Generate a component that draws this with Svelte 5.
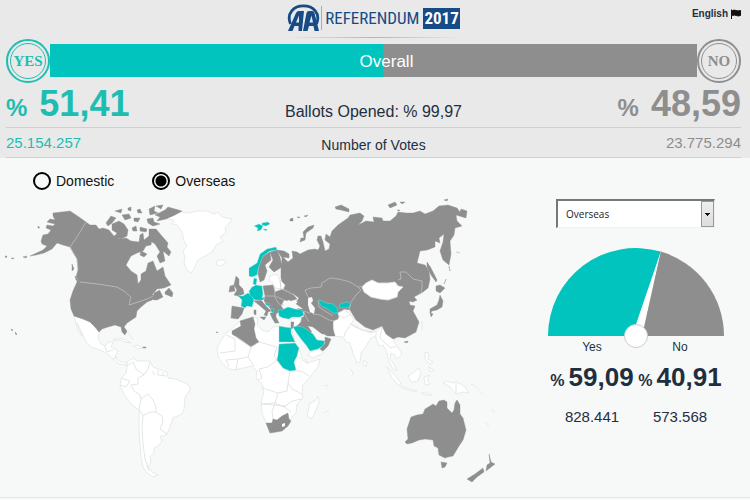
<script>
  let view = 'overseas';
  let region = 'Overseas';

  const overall = {
    yes: 51.41,
    no: 48.59,
    yesVotes: '25.154.257',
    noVotes: '23.775.294',
    opened: '99,97'
  };

  const overseas = { yes: 59.09, no: 40.91, yesVotes: '828.441', noVotes: '573.568' };

  const format = (n) => n.toFixed(2).replace('.', ',');

  // point on the gauge arc where "yes" ends
  const angle = Math.PI * (1 - overseas.yes / 100);
  const gx = 88 + 88 * Math.cos(angle);
  const gy = 88 - 88 * Math.sin(angle);

  // countries without ballot boxes
  const none = [
    // greenland, iceland
    'M167 218L174 215L182 213L190 214L196 212L207 212L214 215L218 213L222 218L232 220L229 224L225 229L226 234L220 238L223 242L216 246L212 253L203 258L197 262L194 270L191 274L187 271L184 264L185 258L183 252L187 247L184 242L182 233L177 226L172 225L174 221L167 220Z',
    'M216 263L219 261L224 261L226 264L221 267L217 266Z',
    // mexico and central america
    'M74 317L83 320L90 323L95 328L99 333L98 339L101 345L105 347L108 343L113 343L111 348L117 351L118 353L115 357L117 361L121 363L126 363L126 366L119 365L113 360L108 355L100 351L91 348L86 343L82 334L77 324L79 329L82 337L79 334L76 325Z',
    'M113 341L119 339L126 341L131 344L125 343L120 341ZM133 347L138 346L143 349L138 350ZM128 333L131 338L133 341',
    // south america
    'M127 363L133 359L137 362L150 362L153 368L158 370L167 373L168 379L175 380L183 383L190 387L190 391L185 398L184 410L182 415L173 419L170 428L167 435L163 437L160 437L162 442L158 447L154 449L154 454L150 458L151 463L148 468L152 473L158 476L153 478L147 474L143 468L141 458L140 445L139 430L139 411L131 405L125 397L120 387L121 380L126 374L127 368Z',
    // africa
    'M240 322L252 318L258 319L257 326L262 331L268 333L273 328L279 327L291 329L295 343L299 350L302 358L308 364L320 360L318 368L309 379L302 387L303 399L297 405L296 414L291 419L289 425L282 432L270 434L266 424L262 414L261 403L264 393L262 385L256 379L257 372L252 367L243 369L235 371L229 370L223 365L218 357L217 350L220 343L226 334L232 330Z',
    'M310 404L315 402L318 397L319 403L314 416L311 420L307 416Z',
    // syria, yemen, afghanistan, pakistan, india
    'M291 320L302 318L300 325L294 328ZM310 353L320 350L323 354L313 359L308 356Z',
    'M333 319L342 315L351 316L354 320L351 325L355 328L363 331L370 334L378 331L376 337L371 339L366 347L361 354L360 363L357 364L353 354L350 344L346 343L343 338L334 337L333 328ZM364 361L367 364L366 368L363 365Z',
    // south east asia
    'M376 332L382 328L388 337L395 339L394 343L399 350L402 355L397 360L395 356L391 354L390 360L394 365L397 372L393 370L389 363L387 354L383 346L379 347L376 340Z',
    'M387 368L393 374L401 384L399 387L392 379ZM401 387L410 390L417 392L411 392L402 389ZM408 377L413 374L419 369L421 373L418 382L411 383ZM424 378L430 376L427 380L430 385L425 386ZM425 353L429 354L428 360L433 363L430 365L425 360ZM429 368L434 371L430 373ZM447 382L452 384L457 383L464 387L469 394L463 393L456 395L449 387L443 384ZM421 394L427 394L432 396L425 396Z',
    'M471 385L477 389L483 396M492 410L495 414M485 423L489 427M351 370L353 375L351 377M324 387L327 386L328 389M324 414L329 411M422 322L422 331'
  ];

  // countries where "no" leads
  const no = [
    // alaska
    'M53 214L62 213L70 212L79 218L86 223L77 238L70 248L63 246L57 244L52 250L44 254L36 256L30 257L43 251L47 247L42 245L41 242L43 236L48 235L51 231L46 229L47 226L53 227L55 225L47 223L50 220L55 221L53 217Z',
    'M23 258L27 257L26 259ZM11 259L14 259L13 260ZM5 257L7 257L6 259ZM38 227L40 229L38 229Z',
    // canada
    'M86 223L90 226L96 226L99 230L103 229L109 231L113 236L119 240L126 239L131 242L139 243L140 236L143 234L144 241L149 237L152 240L151 246L146 247L143 252L137 254L131 257L126 266L131 272L137 276L138 285L141 281L141 275L146 272L148 264L153 262L157 272L163 268L165 277L171 286L164 289L157 290L152 296L155 296L160 292L163 298L157 301L147 300L138 303L129 306L129 300L124 292L117 288L98 285L80 283L76 278L78 271L77 260L74 255L70 248Z',
    'M112 225L119 222L124 225L128 231L127 237L121 240L114 238L117 234L112 231ZM106 224L111 217L116 219L112 224L108 227ZM115 212L122 210L121 214ZM122 216L129 215L131 219L125 221ZM128 209L131 208L131 212L128 211ZM137 211L140 210L142 214L138 214ZM134 219L140 219L138 223L134 222ZM132 229L136 227L137 232L133 232ZM149 210L155 207L154 212L158 214L150 216ZM156 207L163 206L161 210ZM155 216L165 211L168 208L182 212L175 216L166 220L157 222L160 218ZM147 220L153 219L154 223L160 225L153 227L148 224ZM140 228L147 230L146 233L140 232Z',
    'M149 230L156 230L161 236L168 244L167 248L171 253L169 257L163 252L165 262L160 264L157 257L160 253L155 245L149 241ZM141 252L147 255L144 258L140 256ZM154 294L160 291L158 297L154 301ZM165 293L169 289L173 294L172 298L165 295ZM72 265L74 270L72 272ZM75 277L79 283L76 281Z',
    // usa
    'M80 283L98 285L117 288L124 292L131 298L129 306L138 303L147 300L153 297L152 301L147 303L141 308L137 312L136 318L127 324L124 328L127 332L125 336L122 333L121 328L115 326L108 328L102 330L99 333L95 328L90 323L83 320L74 317L71 310L70 301L73 292L77 283L77 280Z',
    'M11 330L13 331L12 332ZM15 333L17 335L16 336ZM143 348L146 348L146 349L143 349ZM216 333L218 333L217 334Z',
    // great britain and ireland
    'M236 277L239 280L239 286L243 290L244 295L238 297L234 296L237 291L234 286ZM230 287L234 286L235 292L229 293Z',
    // spain
    'M232 307L244 309L242 315L238 320L231 319Z',
    // sweden, finland
    'M263 257L270 253L271 261L265 266L267 272L264 281L260 283L258 275L259 267Z',
    'M270 253L277 251L280 258L282 268L274 273L269 268L273 261Z',
    // poland to the black sea
    'M263 287L273 286L275 293L283 290L292 294L297 300L290 302L284 301L281 307L284 311L277 314L274 318L270 309L264 302L265 297Z',
    // italy, greece
    'M254 302L261 301L266 307L271 312L268 313L267 317L264 316L266 312L259 306ZM270 314L276 314L276 318L279 324L275 324L272 319ZM254 311L256 311L256 316L254 315ZM260 318L266 318L264 321Z',
    // russia, kazakhstan, china and the caucasus
    'M277 251L284 252L289 255L289 259L283 258L288 263L293 259L292 252L297 253L300 255L308 251L315 250L318 251L320 247L317 241L318 237L321 237L323 243L325 252L329 250L330 245L325 241L326 235L330 238L332 232L338 226L348 219L350 216L360 214L364 217L362 222L358 226L366 222L374 223L373 218L382 219L383 222L390 222L396 217L398 213L406 214L413 214L420 212L425 215L433 212L439 207L448 206L457 209L460 213L461 210L467 212L466 219L456 216L457 222L462 227L455 229L454 236L450 242L451 255L449 266L443 261L440 252L443 243L444 235L439 239L440 244L435 242L435 248L427 251L420 252L417 264L425 266L429 272L430 280L428 289L423 293L414 298L417 301L413 303L409 302L410 306L415 307L413 312L419 323L416 333L405 339L398 338L393 340L386 335L382 327L373 331L365 328L356 321L350 311L344 310L339 316L338 320L333 322L333 330L335 337L328 337L322 335L313 328L306 325L303 319L305 314L298 310L294 306L299 299L292 294L284 290L281 279L281 270L282 259Z',
    'M302 318L309 323L314 332L309 334L301 328L297 327L301 323ZM325 338L331 340L328 347L323 352L320 350L325 344ZM291 323L294 323L293 329L291 330Z',
    // arctic islands
    'M301 239L304 239L303 233L308 228L314 226L313 229L306 234L305 241L300 243ZM290 220L293 219L293 222L290 222ZM297 218L300 218L299 219ZM304 217L308 216L306 218ZM335 208L341 206L349 210L349 213L341 211L336 210ZM388 206L395 203L397 206L390 209ZM400 203L405 203L402 205ZM444 201L448 200L447 202ZM397 211L400 211L399 212ZM456 253L460 254',
    // sakhalin, japan
    'M427 263L431 269L437 281L436 283L431 276L427 268ZM436 287L440 286L445 289L440 294L436 292ZM440 296L443 302L442 308L437 311L432 312L430 314L430 310L437 306L439 301ZM430 313L433 315L431 318ZM449 267L450 272ZM446 280L444 285ZM404 343L408 342L407 344Z',
    // algeria, south africa
    'M232 332L241 327L240 322L253 318L255 325L254 330L256 339L259 343L251 348L232 335Z',
    'M266 424L272 424L273 420L277 421L282 417L288 414L289 420L291 422L288 427L282 432L270 434Z',
    // australia, new zealand
    'M405 443L408 440L407 430L411 418L417 416L423 415L425 410L430 407L433 405L436 407L439 402L444 401L447 403L447 409L452 414L454 411L455 404L457 401L460 406L460 415L463 419L466 431L463 441L459 447L453 457L448 458L445 459L439 456L438 449L434 447L433 441L425 440L419 441L412 444L407 445Z',
    'M441 463L447 464L445 468L442 469ZM489 455L491 463L495 465L486 472L487 466L490 464ZM483 469L484 473L477 478L472 483L467 480L475 475Z'
  ];

  // countries where "yes" leads
  const yes = [
    // norway, svalbard, denmark
    'M249 277L249 269L257 264L260 255L267 250L276 248L277 251L270 252L263 257L259 267L257 276L252 278Z',
    'M254 227L259 225L263 227L261 231L257 232L258 229ZM262 224L268 223L270 225L266 227L262 226ZM263 230L267 230L266 232Z',
    'M254 279L257 280L256 286L253 285Z',
    // france, benelux, germany, austria
    'M238 297L243 297L248 294L252 297L254 301L252 308L247 307L245 309L241 307L242 301Z',
    'M249 292L252 288L256 286L262 287L263 295L262 299L265 298L263 301L255 301L250 296Z',
    'M265 304L269 304L270 307L266 306ZM271 309L274 310L273 314L271 312Z',
    // turkey
    'M278 311L282 311L288 308L295 310L302 311L304 316L300 318L292 318L289 320L283 319L279 317Z',
    // uzbekistan, kyrgyzstan
    'M318 301L322 302L326 304L333 305L337 309L338 314L333 314L328 310L321 307Z',
    'M340 305L346 303L351 304L349 308L343 309L339 309Z',
    // egypt, sudan, saudi arabia
    'M279 327L284 328L291 329L291 334L295 343L279 343Z',
    'M279 345L295 344L299 349L297 357L294 363L296 371L290 372L283 369L277 361L278 356Z',
    'M293 328L297 327L303 328L313 335L317 341L325 342L323 347L318 350L310 352L306 346L301 340L296 333Z'
  ];

  // seas and empty states lying inside the big landmass
  const inner = [
    'M362 288L366 284L372 281L378 284L388 284L395 283L398 287L403 288L398 293L397 298L388 301L380 300L371 298L364 293Z',
    'M270 277L277 275L280 281L285 286L283 290L275 289L273 284L269 281Z',
    'M338 314L344 311L351 315L344 319L339 317Z'
  ];
  const water = [
    'M308 299L312 298L313 302L311 304L315 309L314 315L310 313L308 306Z',
    'M283 304L289 301L293 304L298 302L296 305L303 310L294 309L288 308L283 308Z',
    'M308 327L312 328L318 334L326 336L323 339L317 338L312 333Z'
  ];

  const bordersDark =
    'M358 288L352 284L347 282L338 280L330 279L322 284L321 288L311 289L305 291L307 296L309 299M358 288L361 291L356 296L351 303M358 288L363 287M398 281L401 280L400 273L406 273L413 280L422 282L422 289L421 294M303 312L310 314M313 315L320 316L329 321L334 322M305 316L309 323M318 302L319 308L325 312L333 317M280 281L281 290L288 293L296 297M274 287L275 297L284 301M265 297L274 297L279 305L284 306M351 304L349 311';
  const bordersAmerica =
    'M86 223L77 238L70 248L74 255L77 260L78 271M80 283L98 285L117 288L124 292L131 298L129 306L138 303L147 300L153 297';
  const bordersLight =
    'M127 367L133 363L136 370L144 376L138 379L138 385L131 386L134 392L140 396L141 400L148 395L153 401L156 408L156 413L162 417L163 423L160 430L167 435M120 386L126 388L130 382L121 379M141 400L139 410L143 417L150 413L156 413M143 417L142 430L143 445L145 460L149 472M150 363L148 370L144 376M152 372L155 376M158 371L158 376L166 377M163 373L163 376' +
    'M226 336L235 340L235 352L220 354M235 337L251 348L259 343L277 348M251 348L248 358L254 367M277 348L274 357L277 361L268 368L259 370M259 370L262 379L258 381M248 358L238 360L236 371M238 360L226 361L229 368M277 361L283 369L290 372L301 372L309 377M290 372L288 384L292 390L302 395M288 384L287 392L278 394L262 389M278 394L275 404L262 405M275 404L284 408L292 402L302 400M284 408L291 413M275 404L272 413L273 420M261 405L273 406L286 407M299 358L308 365' +
    'M351 325L345 334L344 338M351 325L362 331L374 333M382 328L380 339L386 345L391 349L396 347M456 384L456 395M105 347L107 353L113 351M113 360L117 358';
</script>

<header>
  <div class="top">
    <span></span>
    <div class="brand">
      <div class="logo">
        <svg class="aa" viewBox="0 0 34 28" role="img" aria-label="AA">
          <path d="M3.500 20C-1 9 7 1.800 16.500 1.800C26 1.800 34 9 29.500 20" fill="none" stroke="#164b86" stroke-width="2.800" />
          <path d="M1 27L9 9Q10 7 12 7H17L15 27H11.500V22H7.500L5.500 27ZM9 18.500H12V11.500Z" fill="#164b86" fill-rule="evenodd" />
          <path d="M16 27L19.500 9Q20 7 22 7H25Q27 7 27.500 9L32 27H27.500L26.500 22H22L20.500 27ZM22.500 18.500H26L24.500 11.500Z" fill="#164b86" fill-rule="evenodd" />
        </svg>
        <span class="word">REFERENDUM</span>
        <span class="year">2017</span>
      </div>
      <div class="shade"></div>
    </div>
    <button class="language">
      English
      <svg viewBox="0 0 10 10" width="10" height="10" aria-hidden="true">
        <path d="M0.500 0.500V10M1.500 1.500C4 0 5.500 3 9.500 1.500V6.500C6 8 4.500 5 1.500 6.500Z" fill="#111" stroke="#111" />
      </svg>
    </button>
  </div>

  <div class="overall">
    <div class="stamp yes">YES</div>
    <div class="bar">
      <div class="fill" style="width: {overall.yes}%"></div>
      <span>Overall</span>
    </div>
    <div class="stamp no">NO</div>
  </div>

  <div class="row percents">
    <div class="big yes"><small>%</small>{format(overall.yes)}</div>
    <div class="opened">Ballots Opened: % {overall.opened}</div>
    <div class="big no"><small>%</small>{format(overall.no)}</div>
  </div>
  <div class="row votes">
    <div class="yes">{overall.yesVotes}</div>
    <div class="label">Number of Votes</div>
    <div class="no">{overall.noVotes}</div>
  </div>
</header>

<main>
  <section>
    <div class="switch">
      <label><input type="radio" bind:group={view} value="domestic" /> Domestic</label>
      <label><input type="radio" bind:group={view} value="overseas" /> Overseas</label>
    </div>
    <svg class="map" viewBox="0 196 500 294" role="img" aria-label="World map">
      <g class="none">
        {#each none as d}<path {d} />{/each}
      </g>
      <g class="land-no">
        {#each no as d}<path {d} />{/each}
      </g>
      <g class="none">
        {#each inner as d}<path {d} />{/each}
      </g>
      <g class="water">
        {#each water as d}<path {d} />{/each}
      </g>
      <path class="border-dark" d={bordersDark} />
      <path class="border-dark" d={bordersAmerica} />
      <path class="border-light" d={bordersLight} />
      <g class="land-yes">
        {#each yes as d}<path {d} />{/each}
      </g>
      <path class="lesotho" d="M282 425L285 424L285 427L282 428Z" />
    </svg>
  </section>

  <aside>
    <select bind:value={region} aria-label="Region">
      <option>Overseas</option>
      <option>Domestic</option>
    </select>

    <svg class="gauge" viewBox="0 0 176 100" role="img" aria-label="Overseas result">
      <path d="M88 88H0A88 88 0 0 1 {gx} {gy}Z" fill="#00c4bd" />
      <path d="M88 88L{gx} {gy}A88 88 0 0 1 176 88Z" fill="#8e8e8e" />
      <path d="M84 88L{gx} {gy}L94 88Z" fill="#fff" />
      <circle cx="88" cy="88" r="11.500" fill="#fff" stroke="#ccc" />
    </svg>

    <div class="results">
      <div class="result">
        <span class="name">Yes</span>
        <strong><small>%</small>{format(overseas.yes)}</strong>
        <span class="count">{overseas.yesVotes}</span>
      </div>
      <div class="result">
        <span class="name">No</span>
        <strong><small>%</small>{format(overseas.no)}</strong>
        <span class="count">{overseas.noVotes}</span>
      </div>
    </div>
  </aside>
</main>

<style>
  :global(body) {
    background: #f7f9f8;
    color: #1f2f40;
    font-family: 'Liberation Sans', Arial, sans-serif;
    font-size: 15px;
  }

  header {
    background: #e9e9e9;
    padding: 0 9px 0 6px;
  }

  .top {
    display: grid;
    grid-template-columns: 1fr auto 1fr;
    height: 38px;
  }

  .brand {
    padding-top: 4px;
  }

  .logo {
    display: flex;
    align-items: center;
    height: 28px;
    color: #164b86;
    font-family: 'Roboto Condensed', 'Open Sans Condensed', 'Liberation Sans Narrow', 'Liberation Sans', sans-serif;
    font-size: 17px;
    line-height: 22px;
  }

  .aa {
    width: 34px;
    height: 28px;
  }

  .word {
    border-left: 1px solid #9fb0c6;
    padding: 1px 4px 1px 3px;
  }

  .year {
    background: #164b86;
    color: #fff;
    font-weight: bold;
    height: 21px;
    line-height: 21px;
    padding: 0 1px;
  }

  .shade {
    height: 1px;
    margin-top: 5px;
    background: linear-gradient(to right, transparent, #a9b6c6, transparent);
  }

  .language {
    display: flex;
    align-items: center;
    align-self: start;
    justify-self: end;
    gap: 3px;
    margin-top: 7px;
    padding: 0;
    border: none;
    background: none;
    color: #1f2f40;
    font: bold 10px/13px 'Liberation Sans', Arial, sans-serif;
    cursor: pointer;
  }

  .overall {
    display: flex;
    align-items: center;
    height: 45px;
  }

  .stamp {
    box-sizing: border-box;
    width: 44px;
    height: 44px;
    border: 2px solid;
    border-radius: 50%;
    outline: 1px solid;
    outline-offset: -5px;
    font: bold 15px/41px 'Liberation Serif', serif;
    text-align: center;
  }

  .bar {
    position: relative;
    flex: 1;
    height: 33px;
    background: #8e8e8e;
    color: #fff;
    font-size: 17px;
    line-height: 35px;
    text-align: center;
  }

  .fill {
    position: absolute;
    inset: 0 auto 0 0;
    background: #00c4bd;
  }

  .bar span {
    position: relative;
    padding-left: 26px;
  }

  .yes {
    color: #1ebdb2;
  }

  .no {
    color: #8e8e8e;
  }

  .row {
    display: grid;
    grid-template-columns: 1fr auto 1fr;
    align-items: center;
    border-bottom: 1px solid #cfcfcf;
  }

  .row > :last-child {
    justify-self: end;
  }

  .percents {
    height: 44px;
  }

  .votes {
    height: 29px;
  }

  .big {
    display: flex;
    align-items: baseline;
    gap: 12px;
    font-size: 36px;
    font-weight: bold;
    line-height: 42px;
  }

  .big small {
    font-size: 24px;
  }

  .opened {
    padding-top: 12px;
    font-size: 16px;
  }

  .label {
    padding-top: 4px;
    font-size: 14px;
  }

  main {
    display: grid;
    grid-template-columns: 2fr 1fr;
    border-bottom: 1px solid #e3e5e4;
    padding-bottom: 8px;
  }

  .switch {
    display: flex;
    gap: 38px;
    box-sizing: border-box;
    height: 37px;
    padding: 8px 0 0 33px;
    color: #111;
    font-size: 14px;
  }

  .switch label {
    display: flex;
    align-items: center;
    gap: 5px;
  }

  .switch input {
    appearance: none;
    width: 18px;
    height: 18px;
    margin: 0;
    border: 2px solid #000;
    border-radius: 50%;
  }

  .switch input:checked {
    background: radial-gradient(circle, #000 5px, transparent 6px);
  }

  .map {
    display: block;
    width: 100%;
  }

  .none path {
    fill: #fff;
    stroke: #e2e4e3;
    stroke-width: 0.8;
  }

  .land-no path {
    fill: #8e8e8e;
    stroke: #8e8e8e;
    stroke-width: 0.4;
  }

  .land-yes path {
    fill: #00c4bd;
    stroke: #9fdcd8;
    stroke-width: 0.4;
  }

  .water path {
    fill: #f7f9f8;
  }

  .border-dark {
    fill: none;
    stroke: #c4c4c4;
    stroke-width: 0.7;
  }

  .border-light {
    fill: none;
    stroke: #dcdedd;
    stroke-width: 0.8;
  }

  .lesotho {
    fill: #fff;
  }

  aside {
    padding: 41px 26px 0 48px;
  }

  select {
    appearance: none;
    box-sizing: border-box;
    display: block;
    width: calc(100% - 17px);
    height: 29px;
    margin-left: 8px;
    padding: 0 8px;
    border: 1px solid #f0f0f0;
    border-top: 2px solid #777;
    border-left: 2px solid #777;
    border-radius: 0;
    color: #222;
    font: 10px 'Open Sans', sans-serif;
    background:
      linear-gradient(#111, #111) right 4px top 12px / 5px 1px no-repeat,
      linear-gradient(#111, #111) right 5px top 13px / 3px 1px no-repeat,
      linear-gradient(#111, #111) right 6px top 14px / 1px 1px no-repeat,
      linear-gradient(#eee, #ddd) right 1px center / 11px 24px no-repeat,
      linear-gradient(#999, #999) right center / 13px 26px no-repeat,
      #fff;
  }

  .gauge {
    display: block;
    width: 100%;
    margin-top: 20px;
  }

  .results {
    display: grid;
    grid-template-columns: 1fr 1fr;
    margin-top: -8px;
  }

  .result {
    display: flex;
    flex-direction: column;
    align-items: center;
    white-space: nowrap;
  }

  .name {
    font-size: 12px;
    line-height: 14px;
  }

  .result strong {
    display: flex;
    align-items: baseline;
    gap: 4px;
    margin-top: 8px;
    font-size: 26px;
    line-height: 30px;
  }

  .result small {
    font-size: 16px;
  }

  .count {
    margin-top: 12px;
    line-height: 18px;
  }
</style>
